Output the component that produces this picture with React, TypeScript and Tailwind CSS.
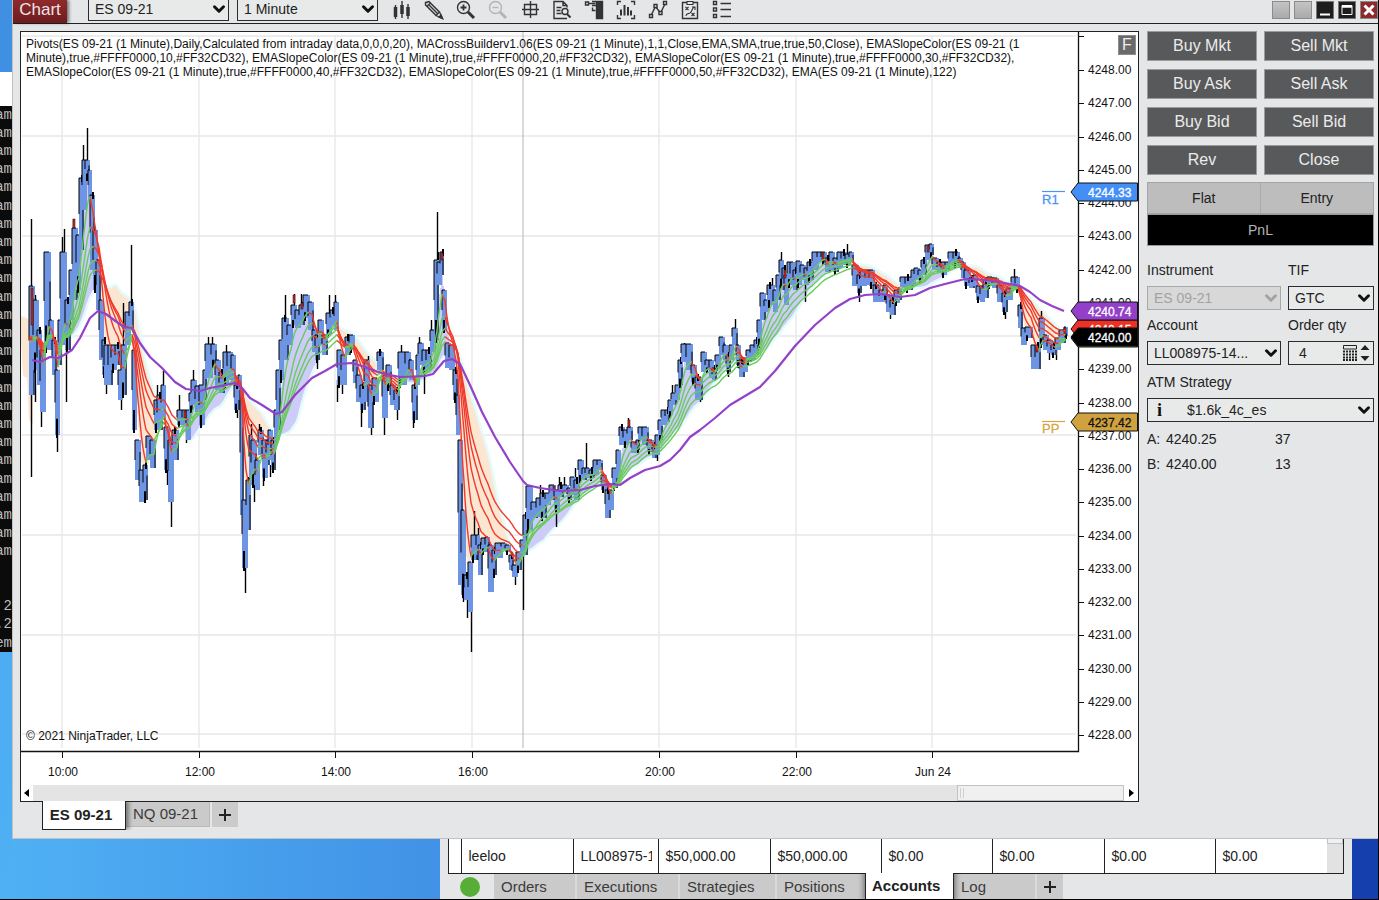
import type { ReactNode } from "react";
import { ChevronDown } from "lucide-react";

// x, high, low of every drawn bar
const bars: number[][] = [
  [30, 286, 395], [34, 300, 370], [38, 330, 385], [41, 350, 412], [45, 252, 350], [50, 320, 350], [53, 340, 375],
  [56, 370, 435], [59, 320, 365], [61, 252, 345], [66, 300, 350], [70, 270, 320], [73, 228, 300], [77, 235, 290],
  [80, 178, 250], [83, 160, 210], [86, 160, 178], [89, 170, 200], [91, 195, 270], [94, 230, 290], [97, 260, 310],
  [100, 300, 360], [103, 340, 375], [105, 345, 385], [109, 345, 385], [112, 345, 370], [116, 345, 365],
  [119, 370, 400], [122, 345, 395], [126, 312, 345], [130, 302, 330], [133, 350, 430], [136, 440, 480],
  [140, 470, 502], [144, 465, 500], [147, 436, 460], [151, 440, 468], [155, 400, 430], [158, 395, 430],
  [162, 385, 420], [165, 427, 470], [169, 440, 502], [173, 430, 460], [178, 410, 425], [183, 410, 425],
  [187, 410, 440], [190, 393, 410], [192, 380, 405], [196, 386, 412], [200, 385, 425], [204, 370, 400],
  [206, 344, 378], [212, 344, 365], [216, 360, 390], [220, 372, 393], [224, 352, 385], [228, 352, 380],
  [232, 355, 385], [235, 385, 410], [239, 375, 400], [241, 390, 515], [243, 500, 568], [247, 480, 530],
  [250, 435, 478], [252, 440, 485], [256, 460, 490], [259, 430, 455], [263, 440, 478], [267, 440, 465],
  [269, 430, 460], [272, 440, 470], [275, 410, 445], [277, 370, 430], [280, 340, 380], [283, 318, 360],
  [288, 325, 345], [292, 305, 325], [296, 310, 328], [300, 305, 325], [304, 295, 318], [309, 302, 330],
  [313, 330, 352], [316, 335, 360], [319, 320, 345], [323, 335, 355], [327, 313, 335], [331, 310, 325],
  [335, 302, 330], [338, 350, 385], [342, 355, 385], [346, 337, 355], [350, 335, 350], [354, 360, 383],
  [357, 375, 402], [361, 385, 410], [365, 360, 402], [369, 385, 428], [373, 378, 402], [378, 352, 370],
  [383, 375, 418], [387, 365, 388], [391, 385, 405], [395, 390, 410], [399, 352, 385], [406, 352, 375],
  [410, 360, 380], [413, 385, 420], [417, 355, 385], [419, 343, 365], [423, 350, 372], [427, 350, 370],
  [431, 330, 352], [435, 260, 340], [438, 262, 285], [441, 252, 275], [443, 290, 330], [446, 343, 368],
  [450, 345, 370], [454, 370, 400], [457, 395, 435], [459, 440, 585], [462, 510, 595], [465, 575, 600],
  [469, 562, 612], [472, 535, 560], [477, 535, 555], [479, 545, 575], [482, 538, 552], [486, 537, 552],
  [489, 545, 592], [493, 550, 575], [496, 543, 558], [502, 543, 550], [506, 545, 552], [510, 555, 570],
  [513, 565, 577], [517, 552, 570], [521, 540, 555], [524, 515, 555], [527, 486, 530], [532, 502, 518],
  [537, 498, 517], [541, 493, 518], [546, 493, 505], [550, 485, 500], [555, 490, 510], [559, 485, 497],
  [563, 485, 492], [568, 488, 500], [571, 477, 495], [575, 480, 500], [579, 460, 480], [583, 468, 480],
  [586, 468, 478], [590, 470, 478], [594, 460, 475], [598, 460, 470], [602, 475, 490], [606, 490, 518],
  [610, 490, 510], [613, 468, 488], [617, 450, 478], [620, 427, 445], [624, 430, 445], [628, 427, 440],
  [632, 442, 453], [637, 440, 450], [639, 427, 440], [643, 427, 445], [648, 440, 452], [653, 445, 458],
  [656, 435, 455], [659, 420, 440], [662, 410, 425], [666, 410, 422], [669, 400, 415], [672, 393, 405],
  [676, 385, 400], [679, 360, 385], [682, 344, 362], [687, 344, 370], [692, 365, 382], [696, 377, 400],
  [702, 352, 372], [706, 360, 370], [710, 360, 378], [713, 368, 380], [716, 355, 368], [720, 337, 355],
  [724, 345, 360], [727, 355, 372], [730, 345, 360], [733, 328, 345], [737, 345, 365], [740, 360, 377],
  [744, 358, 372], [747, 350, 362], [751, 345, 360], [755, 340, 355], [758, 320, 345], [761, 293, 320],
  [765, 300, 312], [768, 285, 305], [774, 290, 312], [777, 275, 300], [780, 260, 285], [783, 268, 290],
  [785, 275, 305], [788, 262, 285], [791, 262, 285], [794, 270, 290], [797, 261, 285], [801, 265, 280],
  [805, 268, 285], [808, 262, 280], [813, 252, 270], [818, 252, 262], [822, 252, 262], [826, 258, 272],
  [830, 252, 270], [834, 258, 272], [838, 252, 268], [842, 252, 265], [846, 254, 265], [850, 252, 262],
  [853, 265, 286], [858, 275, 293], [861, 270, 286], [866, 270, 285], [870, 270, 286], [874, 285, 302],
  [880, 290, 302], [884, 285, 297], [887, 295, 312], [891, 300, 315], [895, 290, 303], [899, 288, 300],
  [901, 277, 287], [906, 277, 290], [912, 270, 285], [915, 268, 280], [919, 270, 280], [922, 260, 275],
  [926, 245, 260], [930, 244, 255], [933, 258, 270], [938, 262, 272], [942, 262, 275], [946, 262, 270],
  [949, 252, 265], [954, 252, 265], [959, 258, 268], [962, 262, 278], [965, 270, 286], [970, 278, 288],
  [974, 275, 286], [977, 286, 300], [981, 286, 302], [984, 280, 298], [988, 277, 286], [993, 278, 288],
  [998, 285, 302], [1003, 293, 312], [1007, 288, 300], [1012, 277, 288], [1016, 277, 290], [1019, 305, 328],
  [1022, 328, 345], [1026, 327, 338], [1032, 345, 369], [1036, 345, 369], [1040, 318, 345], [1044, 335, 350],
  [1048, 340, 353], [1052, 345, 355], [1056, 338, 350], [1060, 330, 343], [1065, 327, 336],
];

const wicks: number[][] = [
  [31, 219, 477], [35, 295, 402], [41, 400, 427], [57, 430, 452], [62, 237, 255], [64, 229, 255], [66, 340, 402],
  [73, 219, 235], [83, 145, 165], [87, 128, 165], [106, 380, 394], [121, 385, 410], [123, 303, 350],
  [131, 245, 305], [157, 385, 400], [163, 371, 390], [167, 460, 485], [171, 495, 527], [179, 395, 415],
  [186, 425, 443], [193, 370, 385], [201, 420, 426], [208, 337, 350], [212, 337, 350], [226, 345, 360],
  [237, 405, 418], [245, 560, 593], [251, 424, 440], [254, 480, 502], [259, 424, 435], [263, 475, 486],
  [270, 465, 477], [285, 295, 320], [294, 294, 308], [301, 294, 308], [317, 350, 369], [329, 295, 315],
  [335, 295, 310], [337, 380, 402], [342, 380, 394], [361, 400, 427], [368, 356, 370], [371, 425, 435],
  [384, 415, 435], [397, 405, 420], [401, 345, 355], [413, 415, 428], [419, 337, 350], [424, 370, 394],
  [431, 320, 335], [437, 212, 265], [438, 252, 265], [463, 590, 602], [467, 598, 618], [471, 600, 652],
  [474, 511, 540], [478, 528, 540], [515, 570, 585], [523, 550, 610], [540, 485, 500], [556, 505, 527],
  [559, 477, 490], [564, 477, 490], [575, 468, 480], [586, 443, 470], [607, 505, 518], [628, 418, 430],
  [657, 452, 461], [672, 385, 395], [684, 343, 350], [700, 380, 402], [728, 370, 377], [735, 319, 335],
  [772, 278, 290], [781, 252, 265], [805, 280, 302], [847, 244, 256], [859, 290, 302], [890, 305, 319],
  [932, 244, 255], [1005, 305, 319], [1014, 269, 280], [1041, 311, 325], [1049, 350, 360], [1056, 345, 360],
];

const redBars: number[][] = [
  [31, 288, 325], [73, 219, 228], [184, 411, 418], [293, 295, 303], [301, 303, 309], [441, 253, 260],
  [553, 486, 491], [628, 420, 427], [784, 270, 278], [822, 253, 260], [927, 246, 252], [1036, 346, 352],
  [1064, 328, 335],
];

const slowEma =
  "M32 360 40 362 50 357 58 358 64 355 72 350 80 338 90 318 98 311 106 314 114 320 124 327 132 328 140 343 150 357 162 368 175 382 186 389 200 391 210 388 225 385 235 383 242 388 250 398 262 405 276 414 282 412 295 395 312 378 325 371 337 364 352 363 362 366 375 371 390 375 400 377 425 376 433 374 444 361 452 359 460 364 470 385 482 412 495 437 510 462 523 481 527 485 540 488 560 491 580 490 595 486 610 484 620 485 630 478 645 470 660 466 670 460 680 450 690 437 700 430 715 418 730 405 745 396 760 387 775 371 795 346 815 325 835 308 850 299 865 295 880 294 900 297 915 295 930 288 945 284 965 279 985 280 1005 283 1020 286 1030 292 1040 300 1052 306 1064 311";

const FIRST = bars[0][0];
const LAST = bars[bars.length - 1][0];

// mid price for every horizontal pixel, the first bars are preceded by a flat run
const mids: number[] = [];
for (let x = FIRST - 60; x <= LAST; x++) {
  if (x < FIRST) {
    mids.push(330 + (x - FIRST + 60) * 0.2);
    continue;
  }
  let i = bars.findIndex((b) => b[0] > x);
  if (i < 0) i = bars.length;
  const bar = bars[i - 1];
  mids.push((bar[1] + bar[2]) / 2);
}

function ema(period: number) {
  const k = 2 / (period * 1.14 + 1);
  let prev = mids[0];
  return mids.map((m) => (prev = prev + k * (m - prev))).slice(60);
}

function sma(size: number) {
  return mids.slice(60).map((_, i) => {
    const end = i + 61;
    const win = mids.slice(end - size, end);
    return win.reduce((a, b) => a + b, 0) / size;
  });
}

function slopePaths(values: number[]) {
  let up = "";
  let down = "";
  for (let i = 1; i < values.length; i++) {
    const seg = `M${FIRST + i - 1} ${values[i - 1].toFixed(1)}L${FIRST + i} ${values[i].toFixed(1)}`;
    if (values[i] <= values[i - 1]) up += seg;
    else down += seg;
  }
  return { up, down };
}

const slow = sma(56);
const fast = ema(5);
const ribbons = [10, 20, 30, 40, 50].map((p) => slopePaths(ema(p)));

function cloud(above: boolean) {
  let d = "";
  fast.forEach((v, i) => {
    if (v < slow[i] === above) {
      d += `M${FIRST + i} ${v.toFixed(1)}H${FIRST + i + 1}V${slow[i].toFixed(1)}H${FIRST + i}Z`;
    }
  });
  return d;
}

const slowPath = "M" + slow.map((v, i) => `${FIRST + i} ${v.toFixed(1)}`).join("L");

const times: [number, string][] = [
  [62, "10:00"], [199, "12:00"], [335, "14:00"], [472, "16:00"], [659, "20:00"], [796, "22:00"], [932, "Jun 24"],
];
const gridRows = [36, 136, 236, 336, 435, 535, 635, 734];
const prices = Array.from({ length: 21 }, (_, i) => 4248 - i);

function PriceTag({ y, fill, text, color = "#fff" }: { y: number; fill: string; text?: string; color?: string }) {
  return (
    <g>
      <path d={`M1071 ${y}L1078 ${y - 9}H1137.500V${y + 9}H1078Z`} fill={fill} stroke="#111" />
      {text && (
        <text x="1088" y={y + 5} fill={color} stroke={color} strokeWidth="0.3">
          {text}
        </text>
      )}
    </g>
  );
}

function PriceChart() {
  return (
    <svg
      viewBox="21 32 1117 753"
      className="block h-auto w-full font-['Liberation_Sans',sans-serif] text-[12px]"
      role="img"
      aria-label="ES 09-21 1 minute chart"
    >
      <g stroke="#e7e7e7" strokeWidth="1.3">
        {times.map(([x]) => (
          <path key={x} d={`M${x} 35V748`} />
        ))}
        {gridRows.map((y) => (
          <path key={y} d={`M22 ${y}H1076`} />
        ))}
      </g>
      <path d="M523 32V748" stroke="#b5b5b5" />

      <path d="M21 316L27 318 33 326 33 425 29 420 27 378 23 376 21 340Z" fill="#fbe6d2" />
      <path d={cloud(false)} fill="#fbe6d2" />
      <path d={cloud(true)} fill="#cdcbf8" />
      <path d={slowPath} fill="none" stroke="#e3fbfb" strokeWidth="2.500" />

      {wicks.map(([x, hi, lo]) => (
        <path key={`${x}-${hi}`} d={`M${x + 0.5} ${hi}V${lo}`} stroke="#000" strokeWidth="1.400" />
      ))}
      {bars.map(([x, hi, lo], i) => {
        const next = bars[i + 1] ?? [x + 2, hi, lo];
        const w = next[0] - x;
        const h = lo - hi;
        return (
          <g key={x}>
            <rect x={x - 1} y={hi} width={w + 2} height={h} fill="#6d95e4" />
            <path d={`M${x - 1} ${hi + h * 0.5}V${hi}h${w}`} fill="none" stroke="#000" />
            {i % 2 === 0 && <path d={`M${x + w} ${hi + h * 0.3}V${lo}`} stroke="#000" />}
            {i % 3 === 1 && <path d={`M${x + 1} ${lo - h * 0.25}V${lo + 3}`} stroke="#000" strokeWidth="2" />}
            {i % 4 === 2 && <path d={`M${x + 2} ${hi - 3}V${hi + 4}`} stroke="#000" strokeWidth="2" />}
          </g>
        );
      })}
      {redBars.map(([x, hi, lo]) => (
        <rect key={x} x={x} y={hi} width="2" height={lo - hi} fill="#d92418" stroke="#111" strokeWidth="0.5" />
      ))}

      {ribbons.map((r, i) => (
        <g key={i} fill="none" strokeWidth="1.400" strokeLinecap="round">
          <path d={r.down} stroke="#f0392b" />
          <path d={r.up} stroke="#6acb5c" />
        </g>
      ))}
      <path d={slowEma} fill="none" stroke="#9341c8" strokeWidth="2.200" strokeLinejoin="round" />

      <path d="M21 751.500H1078.500V32" fill="none" stroke="#111" strokeWidth="1.300" />
      <path d="M1078 36.500h6" stroke="#111" />
      {prices.map((p, i) => (
        <g key={p}>
          <path d={`M1078 ${Math.round(70 + i * 33.25)}.5h6`} stroke="#111" />
          <text x="1088" y={Math.round(74 + i * 33.25)} fill="#111">
            {p.toFixed(2)}
          </text>
        </g>
      ))}
      {times.map(([x, label]) => (
        <g key={x}>
          <path d={`M${x}.5 752v6`} stroke="#111" />
          <text x={x + 1} y="776" textAnchor="middle" fill="#111">
            {label}
          </text>
        </g>
      ))}

      <g strokeWidth="1.200">
        <path d="M1042 191.500h23" stroke="#4a94f5" />
        <path d="M1042 421.500h23" stroke="#d5a642" />
      </g>
      <g fontSize="13" strokeWidth="0.3">
        <text x="1042" y="204" fill="#4a94f5" stroke="#4a94f5">R1</text>
        <text x="1042" y="433" fill="#d5a642" stroke="#d5a642">PP</text>
      </g>

      <PriceTag y={192} fill="#438ff7" text="4244.33" />
      <PriceTag y={338} fill="#5cc04c" />
      <PriceTag y={329} fill="#ee3124" text="4240.15" />
      <PriceTag y={311} fill="#933fc9" text="4240.74" />
      <PriceTag y={337} fill="#000" text="4240.00" />
      <PriceTag y={422} fill="#d0a23f" text="4237.42" color="#111" />
      <text x="26" y="740" fill="#111">© 2021 NinjaTrader, LLC</text>
    </svg>
  );
}

const tools: { name: string; icon: ReactNode; dim?: boolean }[] = [
  {
    name: "Chart style",
    icon: (
      <>
        <path d="M3.500 7v10M10 5v9M16 7v9" strokeWidth="3.500" />
        <path d="M3.500 5v14M10 1v17M16 4v15" />
      </>
    ),
  },
  {
    name: "Drawing tools",
    icon: (
      <>
        <path d="M1.500 2.500 5 1.500 15.500 12 12 15.500 1.500 5Z" fill="#ccc" />
        <path d="M3 6.500 6.500 3M4.500 4.500 13.500 13.500M12 15.500 18.500 18.500 15.500 12" strokeWidth="1.200" />
        <path d="M15 17 18.500 18.500 17 15Z" fill="#333" />
      </>
    ),
  },
  {
    name: "Zoom in",
    icon: (
      <>
        <circle cx="7.500" cy="7.500" r="6" />
        <path d="M4.500 7.500h6M7.500 4.500v6" strokeWidth="1.800" />
        <path d="M12 12 18 18" strokeWidth="3" />
      </>
    ),
  },
  {
    name: "Zoom out",
    dim: true,
    icon: (
      <>
        <circle cx="7.500" cy="7.500" r="6" />
        <path d="M4.500 7.500h6" />
        <path d="M12 12 18 18" strokeWidth="3" />
      </>
    ),
  },
  { name: "Crosshair", icon: <path d="M4.500 4.500h12v10h-12ZM10.500 1v17M2 9.500h17" /> },
  {
    name: "Data box",
    icon: (
      <>
        <path d="M10 18.500H2V1.500h9l4 4v2M11 1.500v4h4M4.500 7.500h5M4.500 10.500h4M4.500 13.500h5M2 18.500h13" />
        <circle cx="13" cy="11.500" r="3" />
        <path d="M15 14 18.500 17.500" strokeWidth="2" />
      </>
    ),
  },
  {
    name: "Chart trader",
    icon: (
      <>
        <path d="M1.500 2h3v3h-3ZM8 1.500h4M8 5.500h4M4.500 3.500h7M8.500 7.500v3h3" />
        <path d="M12.500 1.500h6v17h-6Z" fill="#333" />
      </>
    ),
  },
  {
    name: "Strategies",
    icon: (
      <>
        <path d="M5 1.500H1.500V5M15 1.500h3.500V5M5 18.500H1.500V15M15 18.500h3.500V15" />
        <path d="M5 9.500v6M8.500 5v10.500M12 7v8.500M15 10.500v5" strokeWidth="2" />
      </>
    ),
  },
  {
    name: "Indicators",
    icon: (
      <>
        <path d="M3 15.500 7.500 6.500 12.500 13 17 4" />
        <path d="M1.500 14.500h3v3h-3ZM6 4.500h3v3h-3ZM11 11.500h3v3h-3ZM15.500 1.500h3v3h-3Z" fill="#e5e6e8" />
      </>
    ),
  },
  {
    name: "Strategy list",
    icon: (
      <>
        <path d="M7 2.500H2.500v16h15v-16H13" />
        <path
          d="M7 1.500h6v3H7ZM5.500 7l3 3M8.500 7l-3 3M11.500 13l3 3M14.500 13l-3 3M6 16c0-4 3-1 5-4s1-4 3.500-5M12 7h3v3"
          strokeWidth="1.100"
        />
      </>
    ),
  },
  {
    name: "Properties",
    icon: <path d="M1.500 1.500h3v3h-3ZM1.500 8h3v3h-3ZM1.500 14.500h3v3h-3ZM8.500 3.500h10.500M8.500 9.500h10.500M8.500 16.500h10.500" />,
  },
];

function Tool({ name, icon, dim }: { name: string; icon: ReactNode; dim?: boolean }) {
  return (
    <button aria-label={name} className="h-5 w-5">
      <svg viewBox="0 0 20 20" className="h-5 w-5" fill="none" stroke={dim ? "#b4b4b4" : "#333"} strokeWidth="1.400">
        {icon}
      </svg>
    </button>
  );
}

function Picker({ id, value, label, disabled, className = "", pad = "pl-1.5" }: {
  id: string;
  value: string;
  label?: string;
  disabled?: boolean;
  className?: string;
  pad?: string;
}) {
  return (
    <div className={`relative ${className}`}>
      <select
        id={id}
        aria-label={label}
        disabled={disabled}
        className={`block h-full w-full appearance-none border pr-5 text-[14px] leading-5 ${pad} ${
          disabled ? "border-[#a8a8a8] bg-[#d8d8d8] text-[#a3a3a3] opacity-100" : "border-[#2c2c2c] bg-[#e8eae9] text-[#222]"
        }`}
      >
        <option>{value}</option>
      </select>
      <ChevronDown
        className={`pointer-events-none absolute top-1/2 right-px h-[18px] w-[18px] -translate-y-1/2 ${disabled ? "text-[#a3a3a3]" : "text-[#111]"}`}
        strokeWidth={4}
      />
    </div>
  );
}

function Terminal() {
  const lines = Array.from({ length: 30 }, (_, i) => {
    if (i < 25) return "am";
    return ["", "", " 2", ".2", "em"][i - 25];
  });
  return (
    <div className="flex w-3 shrink-0 flex-col overflow-hidden bg-linear-to-b from-[#4aa3ec] to-[#4fb0f4]">
      <div className="h-[72px] shrink-0 bg-[#3f8fe2]" />
      <div className="h-[34px] shrink-0 bg-white" />
      <div className="flex h-[546px] shrink-0 flex-col bg-[#0b0b0b] font-['Liberation_Mono',monospace] text-[14px] text-[#bdbdbd]">
        {lines.map((line, i) => (
          <div key={i} className="flex min-h-0 flex-1 items-center justify-end whitespace-pre">
            {line}
          </div>
        ))}
      </div>
    </div>
  );
}

function TitleBar() {
  return (
    <header className="flex h-6 shrink-0 items-start border-b border-[#222]">
      <h1 className="h-[23px] w-[54px] bg-linear-to-b from-[#8e2a2c] to-[#6d1c1f] text-center text-[17px] leading-5 text-[#f0e4e4] shadow-[2px_0_3px_rgba(0,0,0,0.5)]">
        Chart
      </h1>
      <div className="ml-[21px] flex gap-2">
        <Picker id="symbol" label="Symbol" value="ES 09-21" className="-mt-1 h-[25px] w-[141px]" />
        <Picker id="interval" label="Interval" value="1 Minute" className="-mt-1 h-[25px] w-[141px]" />
      </div>
      <div className="ml-3.5 flex flex-1 gap-3">
        {tools.map((t) => (
          <Tool key={t.name} {...t} />
        ))}
      </div>
      <div className="mt-px flex gap-1">
        <button aria-label="Link instrument" className="h-[18px] w-[18px] border border-[#8b8b8b] bg-linear-to-b from-[#c4c4c4] to-[#aaa]" />
        <button aria-label="Link interval" className="h-[18px] w-[18px] border border-[#8b8b8b] bg-linear-to-b from-[#c4c4c4] to-[#aaa]" />
        <button aria-label="Minimize" className="h-[18px] w-[18px] border border-[#777] bg-[#1d1d1d]">
          <svg viewBox="0 0 16 16" className="h-4 w-4" stroke="#fff" strokeWidth="2">
            <path d="M3 12.500h10" />
          </svg>
        </button>
        <button aria-label="Maximize" className="h-[18px] w-[18px] border border-[#777] bg-[#1d1d1d]">
          <svg viewBox="0 0 16 16" className="h-4 w-4" fill="none" stroke="#fff">
            <path d="M3 3.500h10v9H3Z" />
            <path d="M3 4.500h10" strokeWidth="2.500" />
          </svg>
        </button>
        <button aria-label="Close window" className="h-[18px] w-[18px] border border-[#8b8b8b] bg-[#8f2a2c]">
          <svg viewBox="0 0 16 16" className="h-4 w-4" stroke="#fff" strokeWidth="3">
            <path d="M3.500 3.500 12.500 12.500M12.500 3.500 3.500 12.500" />
          </svg>
        </button>
      </div>
    </header>
  );
}

const orders = ["Buy Mkt", "Sell Mkt", "Buy Ask", "Sell Ask", "Buy Bid", "Sell Bid", "Rev", "Close"];

function TradePanel() {
  return (
    <aside className="w-[227px] shrink-0 text-[14px] leading-5 text-[#222]">
      <div className="grid grid-cols-2 gap-x-[7px] gap-y-2">
        {orders.map((o) => (
          <button key={o} className="h-[30px] border border-[#9b9b9b] bg-[#58595b] text-[16px] text-[#ececec]">
            {o}
          </button>
        ))}
      </div>
      <div className="mt-[7px] grid h-8 grid-cols-2 border border-[#a5a5a5] bg-[#bdbdbd]">
        <button className="border-r border-[#aaa]">Flat</button>
        <button>Entry</button>
      </div>
      <button className="block h-8 w-full border border-[#999] bg-black text-[#b5b5b5]">PnL</button>

      <div className="mt-3.5 grid grid-cols-[134px_1fr] gap-x-[7px]">
        <label htmlFor="instrument">Instrument</label>
        <label htmlFor="tif">TIF</label>
        <Picker id="instrument" value="ES 09-21" disabled className="mt-1.5 h-6" />
        <Picker id="tif" value="GTC" className="mt-1.5 h-6" />
        <label htmlFor="account" className="mt-[5px]">Account</label>
        <label htmlFor="qty" className="mt-[5px]">Order qty</label>
        <Picker id="account" value="LL008975-14..." className="mt-1.5 h-6" />
        <div className="mt-1.5 flex h-6 items-center border border-[#2c2c2c] bg-[#e8eae9]">
          <input id="qty" defaultValue="4" className="h-full w-full min-w-0 bg-transparent pl-2.5 outline-none" />
          <svg viewBox="0 0 14 16" className="h-4 w-3.5 shrink-0" fill="none" stroke="#222">
            <path d="M0.500 0.500h13v3.500h-13Z" />
            <path d="M0 6.500h14M0 9.500h14M0 12.500h14M0 15h14" strokeWidth="2" strokeDasharray="2 1" />
          </svg>
          <svg viewBox="0 0 16 16" className="h-4 w-4 shrink-0" fill="#222">
            <path d="M8 0 12.500 5h-9ZM8 16 12.500 11h-9Z" />
          </svg>
        </div>
      </div>
      <label htmlFor="atm" className="mt-[7px] block">ATM Strategy</label>
      <div className="relative mt-1.5">
        <Picker id="atm" value="$1.6k_4c_es" className="h-6" pad="pl-[39px]" />
        <span className="pointer-events-none absolute top-0 left-2.5 font-['Liberation_Serif',serif] text-[18px] leading-6 font-bold text-[#111]">i</span>
      </div>
      <dl className="mt-[7px] grid grid-cols-[19px_109px_1fr] gap-y-[5px]">
        <dt>A:</dt>
        <dd>4240.25</dd>
        <dd>37</dd>
        <dt>B:</dt>
        <dd>4240.00</dd>
        <dd>13</dd>
      </dl>
    </aside>
  );
}

function ChartPanel() {
  return (
    <section className="min-w-0 flex-1">
      <div className="relative border border-[#222] bg-white">
        <PriceChart />
        <div className="pointer-events-none absolute top-[5px] left-[5px] text-[12px] leading-[14px] whitespace-nowrap text-[#111]">
          <p>
            Pivots(ES 09-21 (1 Minute),Daily,Calculated from intraday data,0,0,0,20), MACrossBuilderv1.06(ES 09-21 (1
            Minute),1,1,Close,EMA,SMA,true,true,50,Close), EMASlopeColor(ES 09-21 (1
          </p>
          <p>
            Minute),true,#FFFF0000,10,#FF32CD32), EMASlopeColor(ES 09-21 (1 Minute),true,#FFFF0000,20,#FF32CD32),
            EMASlopeColor(ES 09-21 (1 Minute),true,#FFFF0000,30,#FF32CD32),
          </p>
          <p>
            EMASlopeColor(ES 09-21 (1 Minute),true,#FFFF0000,40,#FF32CD32), EMASlopeColor(ES 09-21 (1
            Minute),true,#FFFF0000,50,#FF32CD32), EMA(ES 09-21 (1 Minute),122)
          </p>
        </div>
        <button className="absolute top-[3px] right-0.5 h-5 w-[18px] border border-[#8d8d8d] bg-[#6a6a6a] text-[16px] leading-4 text-[#eee]">
          F
        </button>
        <div className="flex h-4 items-stretch bg-[#e4e4e4]">
          <button aria-label="Scroll left" className="flex w-3 items-center justify-center bg-white">
            <svg viewBox="0 0 6 8" className="h-2 w-1.5">
              <path d="M5 0V8L0 4Z" />
            </svg>
          </button>
          <div className="flex flex-1 justify-end">
            <div className="flex w-[167px] items-center gap-0.5 border border-[#c2c2c2] bg-[#f0f0f0] pl-0.5">
              <span className="h-2.5 w-px bg-[#d0d0d0]" />
              <span className="h-2.5 w-px bg-[#d0d0d0]" />
            </div>
          </div>
          <button aria-label="Scroll right" className="flex w-3.5 items-center justify-center bg-white">
            <svg viewBox="0 0 6 8" className="h-2 w-1.5">
              <path d="M1 0V8L6 4Z" />
            </svg>
          </button>
        </div>
      </div>
      <nav className="flex h-9 items-start pl-[22px] text-[15px] leading-6 text-[#3b3b3b]">
        <button className="relative -mt-px h-[29px] w-[84px] border border-t-0 border-[#222] bg-white pr-1.5 font-bold text-[#222] shadow-[3px_0_4px_rgba(0,0,0,0.4)] [clip-path:inset(0_-8px_0_0)]">
          ES 09-21
        </button>
        <button className="h-[25px] w-[84px] border-r border-b border-[#b9b9b9] bg-[#cacaca] pl-[7px] text-left">NQ 09-21</button>
        <button aria-label="Add chart tab" className="ml-0.5 flex h-[25px] w-[26px] items-center justify-center bg-[#cbcbcb]">
          <Plus />
        </button>
      </nav>
    </section>
  );
}

function Plus() {
  return (
    <svg viewBox="0 0 12 12" className="h-3 w-3" stroke="#222" strokeWidth="2">
      <path d="M6 0V12M0 6H12" />
    </svg>
  );
}

const account = ["leeloo", "LL008975-14", "$50,000.00", "$50,000.00", "$0.00", "$0.00", "$0.00", "$0.00"];

function AccountsWindow() {
  return (
    <section className="flex min-w-0 flex-1 flex-col bg-[#e5e6e8] px-2">
      <div className="flex h-[35px] shrink-0 border border-t-0 border-[#222] bg-white">
        <table className="h-full flex-1 table-fixed border-collapse text-[14px] leading-5 text-[#222]">
          <colgroup>
            <col className="w-3" />
            <col className="w-[112px]" />
            <col className="w-[85px]" />
            <col className="w-[112px]" />
            <col className="w-[111px]" />
            <col className="w-[111px]" />
            <col className="w-[112px]" />
            <col className="w-[111px]" />
            <col className="w-[112px]" />
          </colgroup>
          <tbody>
            <tr>
              <td />
              {account.map((cell, i) => (
                <td key={i} className="overflow-hidden border-l border-[#222] pl-[7px] whitespace-nowrap">
                  <div className={i === 1 ? "w-[71px] overflow-hidden" : ""}>{cell}</div>
                </td>
              ))}
            </tr>
          </tbody>
        </table>
        <div className="w-4 bg-[#e2e2e2]">
          <div className="h-[5px] border border-t-0 border-[#c2c2c2] bg-[#f0f0f0]" />
        </div>
      </div>
      <nav className="flex h-[25px] text-[15px] leading-6 text-[#3b3b3b]">
        <span className="mt-[3px] mr-3.5 ml-3 h-5 w-5 rounded-full bg-[#56ae36]" />
        <button className="w-[83px] border-r-2 border-[#dadada] bg-[#cacaca] pl-[7px] text-left">Orders</button>
        <button className="w-[103px] border-r-2 border-[#dadada] bg-[#cacaca] pl-[7px] text-left">Executions</button>
        <button className="w-[97px] border-r-2 border-[#dadada] bg-[#cacaca] pl-[7px] text-left">Strategies</button>
        <button className="w-[88px] bg-[#cacaca] pl-[7px] text-left">Positions</button>
        <button className="relative -mt-px w-[89px] border-x border-[#222] bg-white pl-1.5 text-left font-bold text-[#222] shadow-[0_0_5px_2px_rgba(0,0,0,0.4)] [clip-path:inset(0_-8px)]">
          Accounts
        </button>
        <button className="w-[83px] border-r-2 border-[#dadada] bg-[#cacaca] pl-[7px] text-left">Log</button>
        <button aria-label="Add tab" className="flex w-[26px] items-center justify-center bg-[#cbcbcb]">
          <Plus />
        </button>
      </nav>
    </section>
  );
}

export default function App() {
  return (
    <div className="flex min-h-screen border-r border-b border-black bg-[#4aa5f0] font-['Liberation_Sans',sans-serif]">
      <Terminal />
      <div className="flex min-w-0 flex-1 flex-col">
        <main className="border-b border-l border-[#bfc1c4] bg-[#e5e6e8]">
          <TitleBar />
          <div className="flex gap-2 pt-[7px] pr-1 pl-[7px]">
            <ChartPanel />
            <TradePanel />
          </div>
        </main>
        <div className="flex flex-1">
          <div className="w-[428px] shrink-0 bg-linear-to-r from-[#4fb0f4] to-[#4192e6]" />
          <AccountsWindow />
          <div className="w-[26px] shrink-0 bg-[#163fae]" />
        </div>
      </div>
    </div>
  );
}
